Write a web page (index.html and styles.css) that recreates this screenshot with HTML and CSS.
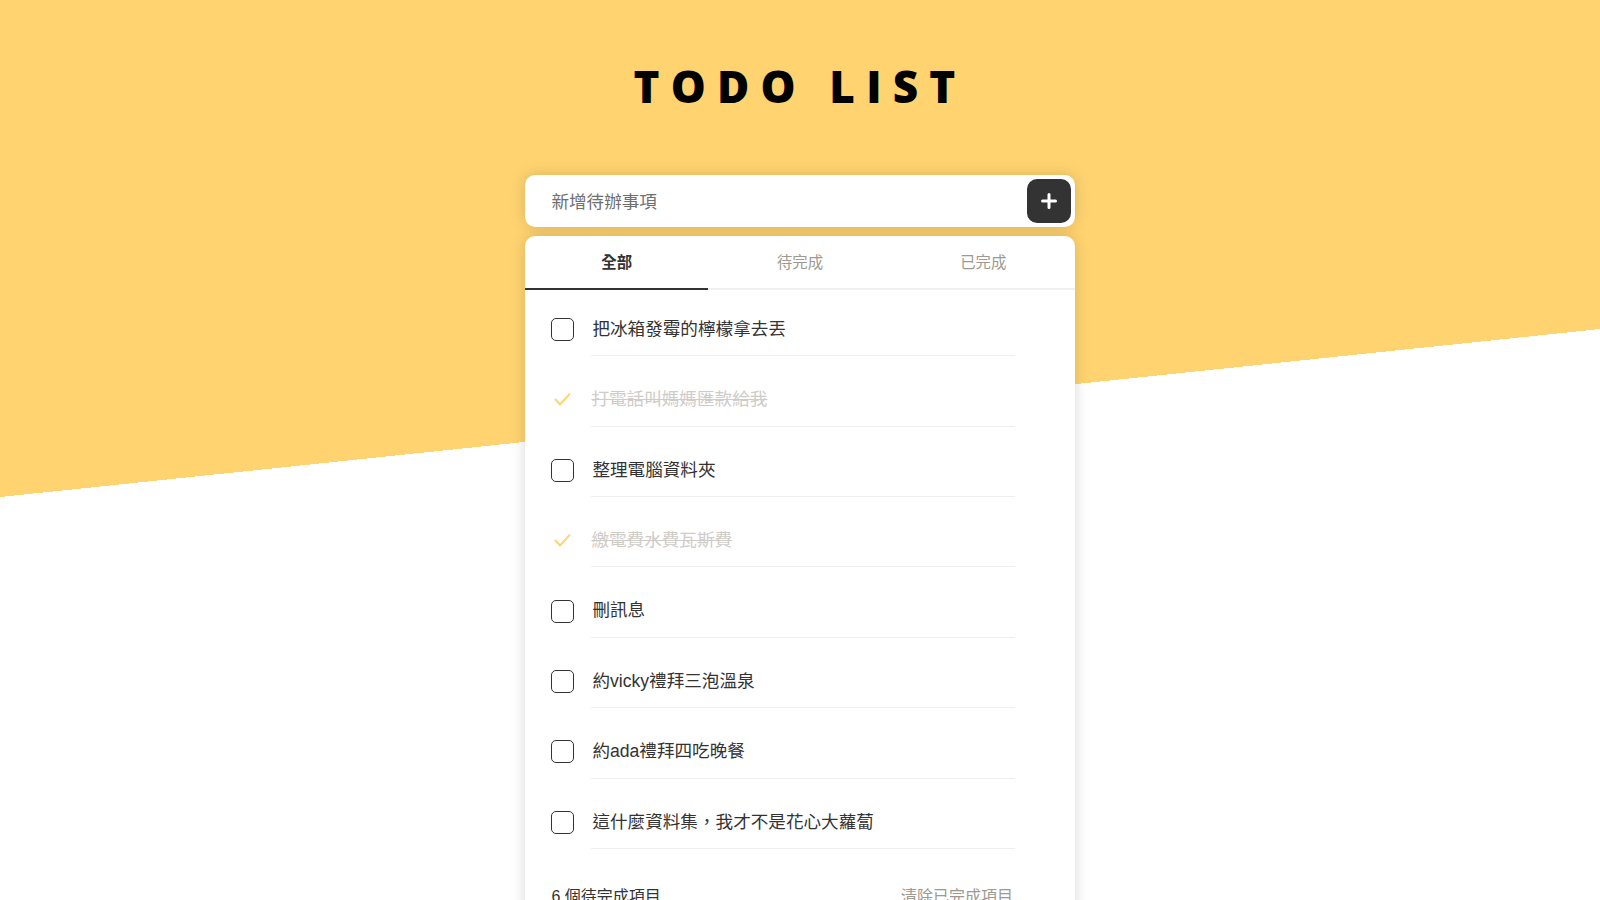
FILE: index.html
```html
<!DOCTYPE html>
<html lang="zh-Hant">
<head>
<meta charset="utf-8">
<title>TODO LIST</title>
<link rel="stylesheet" href="styles.css">
</head>
<body>
<div class="page">
  <h1 class="title">TODO LIST</h1>
  <div class="container">
    <div class="input-box">
      <input class="input" type="text" placeholder="新增待辦事項">
      <button class="add-btn" type="button" aria-label="新增">
        <svg width="16" height="16" viewBox="0 0 16 16"><path d="M8 1.5v13M1.5 8h13" stroke="#fff" stroke-width="3" stroke-linecap="round" fill="none"/></svg>
      </button>
    </div>
    <div class="card">
      <ul class="tabs">
        <li class="tab active">全部</li>
        <li class="tab">待完成</li>
        <li class="tab">已完成</li>
      </ul>
      <ul class="list">
        <li class="item"><span class="box"></span><span class="item-text">把冰箱發霉的檸檬拿去丟</span></li>
        <li class="item done"><span class="check"><svg width="23" height="23" viewBox="0 0 23 23"><polyline points="4,10.8 9,16.4 19,5.6" fill="none" stroke="#FFD370" stroke-width="2"/></svg></span><span class="item-text">打電話叫媽媽匯款給我</span></li>
        <li class="item"><span class="box"></span><span class="item-text">整理電腦資料夾</span></li>
        <li class="item done"><span class="check"><svg width="23" height="23" viewBox="0 0 23 23"><polyline points="4,10.8 9,16.4 19,5.6" fill="none" stroke="#FFD370" stroke-width="2"/></svg></span><span class="item-text">繳電費水費瓦斯費</span></li>
        <li class="item"><span class="box"></span><span class="item-text">刪訊息</span></li>
        <li class="item"><span class="box"></span><span class="item-text">約vicky禮拜三泡溫泉</span></li>
        <li class="item"><span class="box"></span><span class="item-text">約ada禮拜四吃晚餐</span></li>
        <li class="item"><span class="box"></span><span class="item-text">這什麼資料集，我才不是花心大蘿蔔</span></li>
      </ul>
      <div class="footer">
        <span class="count">6 個待完成項目</span>
        <span class="clear">清除已完成項目</span>
      </div>
    </div>
  </div>
</div>
</body>
</html>
```
FILE: styles.css
```css
* { box-sizing: border-box; }

html, body {
  margin: 0;
  padding: 0;
}

body {
  font-family: "Liberation Sans", "Noto Sans CJK TC", sans-serif;
  color: #333;
  background: #fff linear-gradient(174.006deg, #FFD370 494.3px, #ffffff 494.3px) no-repeat;
  background-size: 100% 900px;
}

.page {
  padding-top: 64px;
  padding-bottom: 40px;
}

.title {
  margin: 0 0 67px;
  font-family: "Open Sans", sans-serif;
  font-weight: 800;
  font-size: 44px;
  line-height: 44px;
  letter-spacing: 11.2px;
  text-align: center;
  color: #000;
}

.container {
  width: 550px;
  margin: 0 auto;
}

.input-box {
  display: flex;
  align-items: center;
  height: 52px;
  padding: 4px 4px 4px 26.4px;
  background: #fff;
  border-radius: 10px;
  box-shadow: 0 0 15px rgba(0, 0, 0, 0.15);
}

.input {
  flex: 1;
  border: none;
  outline: none;
  background: transparent;
  padding: 2px 0 0;
  font-family: "Liberation Sans", "Noto Sans CJK TC", sans-serif;
  font-size: 17.6px;
  color: #333;
}

.input::placeholder {
  color: #6f6f6f;
}

.add-btn {
  width: 44px;
  height: 44px;
  border: none;
  padding: 0;
  border-radius: 10px;
  background: #333;
  display: flex;
  align-items: center;
  justify-content: center;
}

.card {
  margin-top: 9.4px;
  background: #fff;
  border-radius: 10px;
  box-shadow: 0 0 15px rgba(0, 0, 0, 0.15);
}

.tabs {
  display: flex;
  margin: 0;
  padding: 0;
  list-style: none;
}

.tab {
  flex: 1;
  text-align: center;
  padding: 14.2px 0;
  font-size: 15.4px;
  line-height: 23px;
  color: #9F9A91;
  border-bottom: 2px solid #EFEFEF;
}

.tab.active {
  color: #333;
  font-weight: 700;
  border-bottom-color: #333;
}

.list {
  margin: 0;
  padding: 0 26.4px;
  list-style: none;
}

.item {
  display: flex;
  align-items: center;
  padding-top: 17px;
  padding-right: 33.6px;
}

.item:first-child {
  padding-top: 13px;
}

.box,
.check {
  flex: none;
  width: 23px;
  height: 23px;
  margin-right: 17px;
}

.box {
  border: 1px solid #333;
  border-radius: 5px;
}

.check svg {
  display: block;
}

.item-text {
  flex: 1;
  padding: 13px 0 13px 1px;
  font-size: 17.6px;
  line-height: 26.4px;
  color: #333;
  border-bottom: 1px solid #EFEFEF;
}

.done .item-text {
  color: #CFCCC8;
  text-decoration: line-through;
  padding-left: 0;
}

.footer {
  display: flex;
  justify-content: space-between;
  padding: 36px 62px 26px 26.4px;
  font-size: 16px;
  line-height: 23px;
}

.count {
  color: #333;
}

.clear {
  color: #9F9A91;
}
```
